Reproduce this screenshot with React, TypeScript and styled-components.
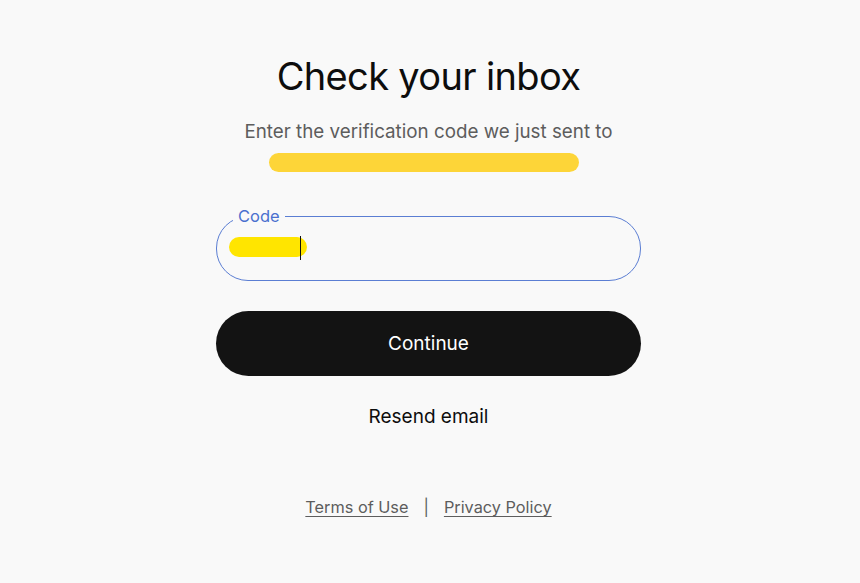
import styled, { createGlobalStyle } from "styled-components"

const GlobalStyle = createGlobalStyle`
  html, body {
    margin: 0;
    padding: 0;
    background: #f9f9f9;
  }
  body {
    font-family: Inter, "Liberation Sans", sans-serif;
    color: #0d0d0d;
  }
`

export default function App() {
  return (
    <>
      <GlobalStyle />
      <Page>
        <Column>
          <Title>Check your inbox</Title>
          <Subtitle>Enter the verification code we just sent to</Subtitle>
          <Redacted />
          <Field>
            <Legend>Code</Legend>
            <InputRow>
              <Scribble />
              <Caret />
            </InputRow>
          </Field>
          <PrimaryButton type="button">Continue</PrimaryButton>
          <TextButton type="button">Resend email</TextButton>
          <Footer>
            <FooterLink href="#">Terms of Use</FooterLink>
            <Divider>|</Divider>
            <FooterLink href="#">Privacy Policy</FooterLink>
          </Footer>
        </Column>
      </Page>
    </>
  )
}

const Page = styled.main`
  min-height: 583px;
  display: flex;
  justify-content: center;
  padding-top: 52px;
  box-sizing: border-box;
`

const Column = styled.div`
  width: 425px;
  margin-left: -3px;
  display: flex;
  flex-direction: column;
  align-items: center;
`

const Title = styled.h1`
  margin: 0;
  font-size: 38px;
  font-weight: 400;
  line-height: 48px;
  letter-spacing: -0.65px;
  color: #0d0d0d;
`

const Subtitle = styled.p`
  margin: 20px 0 0;
  font-size: 18.8px;
  line-height: 24px;
  color: #5d5d5d;
`

const Redacted = styled.span`
  display: block;
  width: 310px;
  height: 19px;
  margin: 9px 0 0 -10px;
  border-radius: 10px;
  background: #fdd538;
`

const Field = styled.fieldset`
  box-sizing: border-box;
  width: 100%;
  height: 73px;
  margin: 36px 0 0;
  padding: 11px 12px 0;
  border: 1px solid #5b7ed3;
  border-radius: 32px;
`

const Legend = styled.legend`
  margin-left: 4px;
  padding: 0 5px;
  font-size: 16.5px;
  line-height: 16px;
  color: #4a70cf;
`

const InputRow = styled.div`
  display: flex;
  align-items: center;
  height: 24px;
  position: relative;
`

const Scribble = styled.span`
  display: block;
  width: 78px;
  height: 20px;
  border-radius: 10px;
  background: #ffe500;
`

const Caret = styled.span`
  position: absolute;
  left: 71px;
  top: 1px;
  width: 1px;
  height: 24px;
  background: #111;
`

const PrimaryButton = styled.button`
  width: 100%;
  height: 65px;
  margin-top: 30px;
  border: none;
  border-radius: 33px;
  background: #131313;
  color: #ffffff;
  font-family: inherit;
  font-size: 19px;
  cursor: pointer;
`

const TextButton = styled.button`
  margin-top: 29px;
  border: none;
  background: none;
  padding: 0;
  font-family: inherit;
  font-size: 19px;
  line-height: 24px;
  color: #0d0d0d;
  cursor: pointer;
`

const Footer = styled.footer`
  margin-top: 67px;
  display: flex;
  align-items: center;
  gap: 15px;
  font-size: 16.3px;
  line-height: 22px;
  color: #5d5d5d;
`

const FooterLink = styled.a`
  color: #5d5d5d;
  text-decoration: underline;
  text-underline-offset: 3px;
`

const Divider = styled.span`
  color: #5d5d5d;
`
